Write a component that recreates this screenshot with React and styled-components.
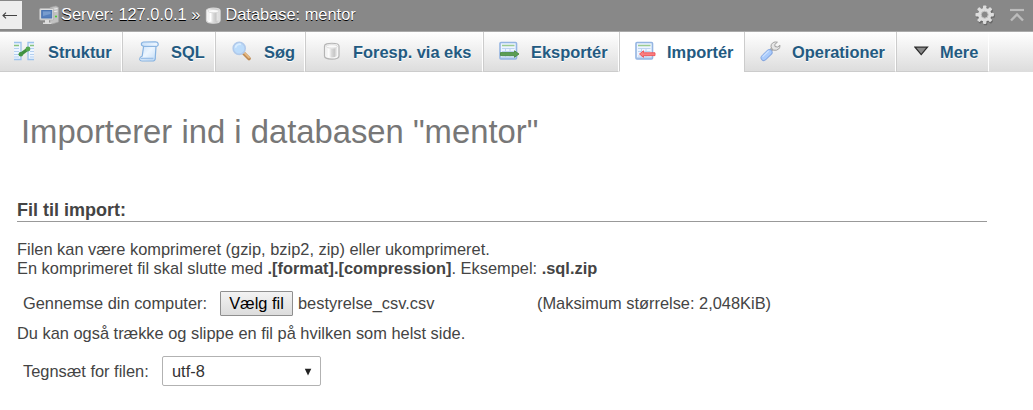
import React from "react";
import styled, { createGlobalStyle } from "styled-components";

const GlobalStyle = createGlobalStyle`
  * { box-sizing: border-box; }
  body {
    margin: 0;
    background: #fff;
    color: #444;
    font-family: "Liberation Sans", Arial, sans-serif;
    font-size: 16.4px;
    line-height: 19px;
    overflow: hidden;
  }
  svg { display: block; flex: none; }
`;

const ServerBar = styled.header`
  display: flex;
  align-items: flex-start;
  height: 31px;
  background: #888;
  color: #fff;
  white-space: nowrap;
  text-shadow: 0 1px 0 #000;
`;

const NavToggle = styled.div`
  width: 22px;
  height: 28px;
  margin: 1px 17px 0 0;
  padding: 10px 2px 0;
  background: #eee;
`;

const Crumb = styled.span`
  display: flex;
  padding-top: ${(p) => p.$drop || 5}px;
  margin-right: ${(p) => p.$gap || 0}px;
`;

const BarActions = styled.div`
  display: flex;
  gap: 14px;
  margin: 5px 8px 0 auto;
`;

const TabBar = styled.nav`
  display: flex;
  height: 41px;
  border-top: 1px solid #aaa;
  background: linear-gradient(#fff, #dcdcdc);
`;

const TabItem = styled.a`
  display: flex;
  align-items: center;
  flex: none;
  width: ${(p) => p.$width}px;
  padding: 1px 0 0 ${(p) => p.$inset || 16}px;
  border-left: ${(p) => (p.$first ? 0 : 1)}px solid #ccc;
  border-right: 1px solid #fff;
  border-bottom: 1px solid ${(p) => (p.$active ? "#fff" : "#ccc")};
  background: ${(p) => (p.$active ? "#fff" : "transparent")};
  color: #235a81;
  font-weight: bold;
  text-shadow: 0 1px 0 #fff;
  white-space: nowrap;
`;

const TabIcon = styled.span`
  flex: none;
  width: ${(p) => p.$width}px;
  margin-top: -2px;
`;

const TabFill = styled.div`
  flex: 1;
  border-bottom: 1px solid #ddd;
`;

const Page = styled.main`
  padding: 40px 46px 0 17px;
`;

const Title = styled.h2`
  margin: 0 0 0 4px;
  height: 40px;
  color: #777;
  font-size: 32.8px;
  line-height: 40px;
  font-weight: normal;
`;

const SectionTitle = styled.h3`
  margin: 48px 0 18px;
  height: 22px;
  border-bottom: 1px solid #999;
  font-size: 18px;
  line-height: 20px;
`;

const Line = styled.p`
  margin: 0;
  white-space: nowrap;
`;

const FieldRow = styled.div`
  display: flex;
  align-items: center;
  height: ${(p) => p.$height}px;
  margin: ${(p) => p.$margin};
  padding-left: 6px;
  white-space: nowrap;
`;

const Label = styled.label`
  width: ${(p) => p.$width}px;
`;

const FileButton = styled.button`
  width: 73px;
  height: 25px;
  margin-right: 5px;
  padding: 0;
  border: 1px solid #8f8f8f;
  border-radius: 1px;
  background: linear-gradient(#f3f3f3, #dcdcdc);
  color: #000;
  font: 16.4px/19px "Liberation Sans", Arial, sans-serif;
`;

const FileName = styled.span`
  width: 239px;
`;

const Select = styled.div`
  display: flex;
  align-items: center;
  justify-content: space-between;
  width: 159px;
  height: 30px;
  padding: 1px 8px 0 9px;
  border: 1px solid #b2b2b2;
  border-radius: 2px;
  color: #333;
`;

const ServerIcon = () => (
  <svg width="21" height="20" viewBox="0 0 21 20">
    <path d="M11 2.5 L17 1 L19.5 2.5 V17 L13 19 L11 17Z" fill="#c2c2c2" stroke="#a5a5a5" strokeWidth=".7" />
    <path d="M13 4.5 L18.5 3.5 M13 7 L18.5 6" stroke="#eee" />
    <rect x=".7" y="3.5" width="14" height="11.5" rx="1" fill="#dedede" stroke="#b4b4b4" />
    <rect x="2.7" y="5.5" width="10" height="7.5" fill="#557fbd" stroke="#4a74b0" />
    <path d="M4 6.5H11.5V9L4 11Z" fill="#789ccd" />
    <path d="M6 15H10V17.5H12.5V19H4V17.5H6Z" fill="#ddd" />
    <circle cx="17" cy="11.5" r="1.1" fill="#4ccb35" />
  </svg>
);

const DatabaseIcon = ({ size = 18, pale }) => (
  <svg width={size} height={size} viewBox="0 0 18 18">
    <defs>
      <linearGradient id={pale ? "dbPale" : "dbTab"}>
        <stop stopColor="#ededed" />
        <stop offset=".22" stopColor="#fff" />
        <stop offset=".48" stopColor="#dadada" />
        <stop offset=".75" stopColor="#c7c7c7" />
        <stop offset="1" stopColor="#eee" />
      </linearGradient>
    </defs>
    <path
      d="M1.5 4 C1.5 .3 16 .3 16 4 V14 C16 18.2 1.5 18.2 1.5 14Z"
      fill={pale ? "url(#dbPale)" : "#f7f7f7"}
      stroke={pale ? "#d7d7d7" : "#b4b4b4"}
      strokeWidth="1.2"
    />
    <path d="M3.5 5.5 C6 7 12 7 14 5.5 V13.8 C12 16 5.5 16 3.5 13.8Z" fill={pale ? "url(#dbPale)" : "url(#dbTab)"} />
    <ellipse cx="8.75" cy="4.4" rx="5.7" ry="1.7" fill="#fafafa" stroke="#d1d1d1" strokeWidth=".7" />
  </svg>
);

const GearIcon = () => (
  <svg width="21" height="21" viewBox="0 0 21 21">
    <g transform="translate(11.5 11)" fill="#555" opacity=".6">
      <circle r="6.6" />
      {[0, 45, 90, 135].map((a) => (
        <rect key={a} x="-1.8" y="-9.3" width="3.6" height="18.6" rx="1" transform={`rotate(${a})`} />
      ))}
    </g>
    <g transform="translate(10.7 9.7)" fill="#ddd">
      <circle r="6.7" />
      {[0, 45, 90, 135].map((a) => (
        <rect key={a} x="-1.7" y="-9.2" width="3.4" height="18.4" rx=".8" transform={`rotate(${a})`} />
      ))}
      <circle r="3.5" fill="#888" stroke="#c5c5c5" />
    </g>
  </svg>
);

const CollapseIcon = () => (
  <svg width="16" height="18" viewBox="0 0 16 18">
    <path d="M1 5H15" stroke="#bbb" strokeWidth="2.2" />
    <path d="M2 15.5L8 9.5L14 15.5" fill="none" stroke="#bbb" strokeWidth="2.4" />
  </svg>
);

const BackIcon = () => (
  <svg width="16" height="10" viewBox="0 0 16 10">
    <path d="M1 4.5H15 M4 1.7L1 4.5L4 7.3" fill="none" stroke="#444" strokeWidth="1.1" />
  </svg>
);

const StructureIcon = () => (
  <svg width="20" height="20" viewBox="0 0 20 20">
    <path d="M0 1.5H6V18.5H0Z M15 1.5H20V18.5H15Z" fill="#edf5ff" />
    <path d="M0 1.5H7V18.5H0 M20 1.5H14V18.5H20" fill="none" stroke="#9cc2ec" strokeWidth="1.3" />
    <path d="M0 7.5H5M0 10.5H5M0 13.5H5M0 16H5M16 7.5H20M16 10.5H20M16 13.5H20M16 16H20" stroke="#b4cfef" />
    <path d="M0 4.5H5M16 4.5H20" stroke="#88c37c" strokeWidth="1.4" />
    <path d="M7 13.2L14 8" stroke="#3f8f3f" strokeWidth="3.4" />
    <circle cx="6.8" cy="13.3" r="2.3" fill="#429642" />
    <circle cx="14" cy="8" r="2.4" fill="#55a850" />
  </svg>
);

const ScrollIcon = () => (
  <svg width="20" height="21" viewBox="0 0 20 21">
    <defs>
      <linearGradient id="paper" x2="1" y2="1">
        <stop stopColor="#c0dbf8" />
        <stop offset=".5" stopColor="#edf6ff" />
        <stop offset="1" stopColor="#bcd8f5" />
      </linearGradient>
    </defs>
    <path d="M4.5 1Q1.8 1.6 2.6 4.2L4.6 5.4L3.2 15Q.5 16 .7 18.5Q1 20 3 20H14.5Q16.6 19.5 16.3 16L17 5.6Q19.8 5 19 2.3Q18.5 .8 16.5 .8Z" fill="url(#paper)" stroke="#86b2e0" strokeWidth="1.2" />
    <path d="M4.6 5.4H17" fill="none" stroke="#8bb5e1" strokeWidth="1.2" />
    <path d="M2 17.5H14.5" stroke="#9cc0e8" strokeWidth="1.6" />
  </svg>
);

const SearchIcon = () => (
  <svg width="19" height="20" viewBox="0 0 19 20">
    <path d="M11.5 12L17 17.5" stroke="#bd8850" strokeWidth="3.6" strokeLinecap="round" />
    <path d="M12 11.5L17 16.5" stroke="#e4b883" strokeWidth="1.8" strokeLinecap="round" />
    <circle cx="7.2" cy="7.4" r="6" fill="#bcdcfb" stroke="#b1caeb" strokeWidth="1.6" />
    <path d="M3.5 6.8A4 4 0 0 1 9 3.4" fill="none" stroke="#d9edff" strokeWidth="1.8" />
  </svg>
);

const TransferIcon = ({ incoming }) => (
  <svg width="21" height="20" viewBox="0 0 21 20">
    <rect x="1" y="1.5" width="16.5" height="16.5" rx="1" fill="#edf5ff" stroke="#94b5e2" strokeWidth="1.6" />
    <path d="M3 4.5H15.5" stroke="#9bcb90" strokeWidth="1.5" />
    <path d="M3 7.5H15.5M3 10.5H15.5M3 15H15.5M6.5 7V16M11 7V16" stroke="#bdd3f1" />
    <path d="M2 17.2H17" stroke="#9dbce6" strokeWidth="1.5" />
    {incoming ? (
      <path d="M4.5 13L8.5 9.8V11.8H20V14.6H8.5V16.3Z" fill="#fa7f80" stroke="#ee5055" strokeWidth=".9" />
    ) : (
      <path d="M1.5 11.6H15.5V9.8L20 13L15.5 16.3V14.6H1.5Z" fill="#5c9e55" stroke="#488a42" strokeWidth=".9" />
    )}
  </svg>
);

const WrenchIcon = () => (
  <svg width="21" height="21" viewBox="0 0 21 21">
    <path d="M10 10L14 6.5" stroke="#aaa" strokeWidth="3.5" />
    <path d="M17.4 1.2Q13.3 .2 11.4 3.4Q10.5 5.3 11.5 7.2L13.7 9.2Q16.7 9.8 18.7 8Q20 6.8 20 4.3L17.7 6L15 5.6L14.8 3.4Z" fill="#e5e5e5" stroke="#a0a0a0" />
    <path d="M3.8 16.8L9.4 11.4" stroke="#86a7e0" strokeWidth="6.4" strokeLinecap="round" />
    <path d="M3.8 16.6L9.2 11.3" stroke="#a9cbfb" strokeWidth="4.7" strokeLinecap="round" />
    <path d="M3 15.4L8.4 10.3" stroke="#cce1ff" strokeWidth="1.2" strokeLinecap="round" />
  </svg>
);

const MoreIcon = () => (
  <svg width="15" height="10" viewBox="0 0 15 10">
    <path d="M1 1.2H13.4L7.2 8.6Z" fill="#888" stroke="#2b2b2b" strokeWidth="1.3" />
  </svg>
);

const ArrowIcon = () => (
  <svg width="8" height="8" viewBox="0 0 8 8">
    <path d="M.8 .8H7.3L4 7.5Z" fill="#222" />
  </svg>
);

const tabs = [
  { label: "Struktur", width: 122, inset: 14, iconWidth: 34, icon: <StructureIcon />, first: true },
  { label: "SQL", width: 93, iconWidth: 32, icon: <ScrollIcon /> },
  { label: "Søg", width: 90, iconWidth: 32, icon: <SearchIcon /> },
  { label: "Foresp. via eks", width: 178, inset: 17, iconWidth: 30, icon: <DatabaseIcon /> },
  { label: "Eksportér", width: 136, inset: 15, iconWidth: 32, icon: <TransferIcon /> },
  { label: "Importér", width: 125, inset: 15, iconWidth: 32, icon: <TransferIcon incoming />, active: true },
  { label: "Operationer", width: 152, inset: 15, iconWidth: 32, icon: <WrenchIcon /> },
  { label: "Mere", width: 93, inset: 17, iconWidth: 26, icon: <MoreIcon /> },
];

export default function App() {
  return (
    <>
      <GlobalStyle />
      <ServerBar>
        <NavToggle><BackIcon /></NavToggle>
        <Crumb $gap={1}><ServerIcon /></Crumb>
        <Crumb $gap={5}>Server: 127.0.0.1 »</Crumb>
        <Crumb $gap={3} $drop={7}><DatabaseIcon size={17} pale /></Crumb>
        <Crumb>Database: mentor</Crumb>
        <BarActions>
          <GearIcon />
          <CollapseIcon />
        </BarActions>
      </ServerBar>
      <TabBar>
        {tabs.map((t) => (
          <TabItem key={t.label} $width={t.width} $inset={t.inset} $first={t.first} $active={t.active}>
            <TabIcon $width={t.iconWidth}>{t.icon}</TabIcon>
            {t.label}
          </TabItem>
        ))}
        <TabFill />
      </TabBar>
      <Page>
        <Title>Importerer ind i databasen "mentor"</Title>
        <SectionTitle>Fil til import:</SectionTitle>
        <Line>Filen kan være komprimeret (gzip, bzip2, zip) eller ukomprimeret.</Line>
        <Line>
          En komprimeret fil skal slutte med <b>.[format].[compression]</b>. Eksempel: <b>.sql.zip</b>
        </Line>
        <FieldRow $height={25} $margin="13px 0 8px">
          <Label $width={197}>Gennemse din computer:</Label>
          <FileButton>Vælg fil</FileButton>
          <FileName>bestyrelse_csv.csv</FileName>
          <span>(Maksimum størrelse: 2,048KiB)</span>
        </FieldRow>
        <Line>Du kan også trække og slippe en fil på hvilken som helst side.</Line>
        <FieldRow $height={30} $margin="13px 0 0">
          <Label $width={139}>Tegnsæt for filen:</Label>
          <Select>
            utf-8
            <ArrowIcon />
          </Select>
        </FieldRow>
      </Page>
    </>
  );
}
